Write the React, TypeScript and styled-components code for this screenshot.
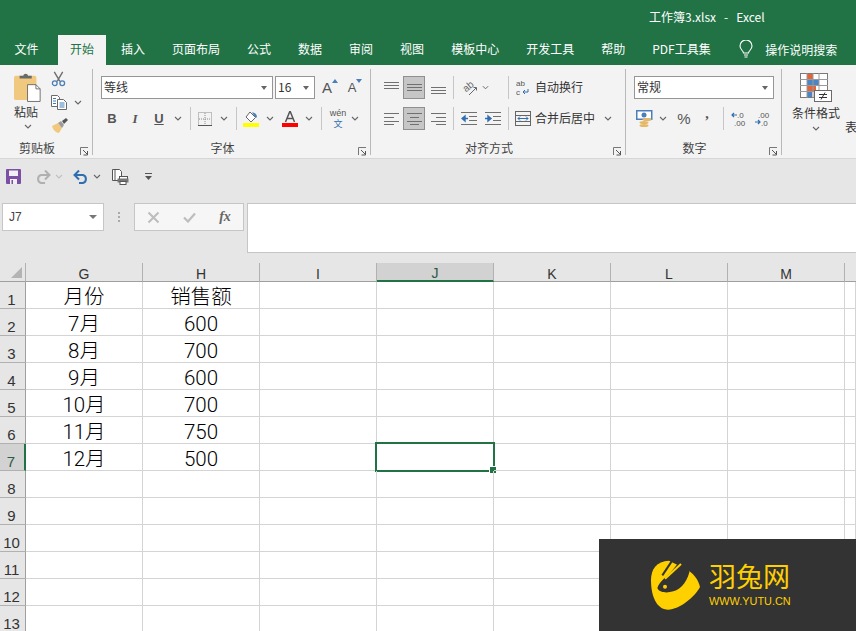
import React from 'react';
import styled, { createGlobalStyle } from 'styled-components';

const GREEN = '#217346';
const UI_FONT = '"Noto Sans CJK SC", "Liberation Sans", sans-serif';

const GlobalStyle = createGlobalStyle`
  html, body {
    margin: 0;
    padding: 0;
    background: #e6e6e6;
  }
  * {
    box-sizing: border-box;
  }
`;

const TABS = ['文件', '开始', '插入', '页面布局', '公式', '数据', '审阅', '视图', '模板中心', '开发工具', '帮助', 'PDF工具集'];
const COLUMNS = ['G', 'H', 'I', 'J', 'K', 'L', 'M'];
const ROW_COUNT = 13;
const SHEET: Record<number, [string, string]> = {
  1: ['月份', '销售额'],
  2: ['7月', '600'],
  3: ['8月', '700'],
  4: ['9月', '600'],
  5: ['10月', '700'],
  6: ['11月', '750'],
  7: ['12月', '500'],
};

const Chevron = ({ color = '#666' }: { color?: string }) => (
  <svg width="8" height="5" viewBox="0 0 8 5">
    <path d="M1 1l3 3 3-3" fill="none" stroke={color} strokeWidth="1.1" />
  </svg>
);

const Lines = ({ rows, w = 15 }: { rows: [number, number][]; w?: number }) => (
  <svg width={w} height="15" viewBox={`0 0 ${w} 15`}>
    {rows.map(([y, len], i) => (
      <rect key={i} x={(w - len) / 2} y={y} width={len} height="1" fill="#707070" />
    ))}
  </svg>
);

const LeftLines = () => (
  <svg width="15" height="15" viewBox="0 0 15 15">
    {[2, 6, 10, 13].map((y, i) => (
      <rect key={y} x="0" y={y} width={i % 2 ? 10 : 15} height="1" fill="#707070" />
    ))}
  </svg>
);

const RightLines = () => (
  <svg width="15" height="15" viewBox="0 0 15 15">
    {[2, 6, 10, 13].map((y, i) => (
      <rect key={y} x={i % 2 ? 5 : 0} y={y} width={i % 2 ? 10 : 15} height="1" fill="#707070" />
    ))}
  </svg>
);

const PasteIcon = () => (
  <svg width="28" height="30" viewBox="0 0 30 32">
    <rect x="0" y="4" width="24" height="26" rx="2" fill="#f0c97f" />
    <path d="M6 7V4h4c0-3 5-3 5 0h4v3z" fill="#6a6a6a" />
    <path d="M14.500 13.500h9l4.500 4.500v13.500h-13.500z" fill="#fff" stroke="#6a6a6a" />
    <path d="M23.500 13.500v4.500h4.500" fill="none" stroke="#6a6a6a" />
  </svg>
);

const CutIcon = () => (
  <svg width="15" height="16" viewBox="0 0 16 16">
    <path d="M3.500 0.500l6 10M12.500 0.500l-6 10" stroke="#6f6f6f" strokeWidth="1.500" fill="none" />
    <circle cx="4" cy="12.500" r="2.500" fill="none" stroke="#4a7fb8" strokeWidth="1.400" />
    <circle cx="12" cy="12.500" r="2.500" fill="none" stroke="#4a7fb8" strokeWidth="1.400" />
  </svg>
);

const CopyIcon = () => (
  <svg width="16" height="15" viewBox="0 0 16 15">
    <path d="M.500.500h6l2 2v9h-8z" fill="#fff" stroke="#6a6a6a" />
    <path d="M6.500 4.500h6l3 3v7h-9z" fill="#fff" stroke="#6a6a6a" />
    <path d="M2 3.500h3M2 6h3M2 8.500h3M8.500 8h5M8.500 10h5M8.500 12h5" stroke="#3f7cb6" />
  </svg>
);

const BrushIcon = () => (
  <svg width="17" height="15" viewBox="0 0 17 15">
    <path d="M1 8l6-3 4 5-3 5c-3 0-6-3-7-7z" fill="#f0c97f" />
    <path d="M7 5l3-2 3 4-2 3z" fill="#9b9b9b" />
    <path d="M11 3l4-3 2 2-4 4z" fill="#555" />
  </svg>
);

const BorderIcon = () => (
  <svg width="14" height="14" viewBox="0 0 14 14">
    <rect x=".5" y=".5" width="13" height="13" fill="none" stroke="#8a8a8a" strokeDasharray="1 1" />
    <path d="M7 1v12M1 7h12" stroke="#8a8a8a" strokeDasharray="1 1" />
    <path d="M0 13.500h14" stroke="#555" />
  </svg>
);

const FillIcon = () => (
  <svg width="16" height="16" viewBox="0 0 16 16">
    <path d="M7 1l5.500 5.500L8 11 3 6z" fill="#fff" stroke="#666" />
    <path d="M9 1.500c3 0 5 2 5 5l-2-.5z" fill="#4a7fb8" />
    <rect x="0" y="12" width="16" height="4" fill="#ffff00" />
  </svg>
);

const FontColorIcon = () => (
  <svg width="16" height="16" viewBox="0 0 16 16">
    <path d="M3.500 11L8 0l4.500 11M5 7.500h6" fill="none" stroke="#555" strokeWidth="1.500" />
    <rect x="0" y="12" width="16" height="4" fill="#ff0000" />
  </svg>
);

const GrowIcon = ({ up }: { up: boolean }) => (
  <svg width="6" height="4" viewBox="0 0 6 4">
    <path d={up ? 'M0 4l3-4 3 4z' : 'M0 0l3 4 3-4z'} fill="#4a7fb8" />
  </svg>
);

const OrientIcon = () => (
  <svg width="18" height="18" viewBox="0 0 18 18">
    <text x="2" y="11" fontSize="10" fill="#666" fontFamily="Liberation Sans, sans-serif" transform="rotate(-40 7 8)">ab</text>
    <path d="M8 16l7-7M12.500 8.500H15.500V11.500" fill="none" stroke="#666" />
  </svg>
);

const WrapIcon = () => (
  <svg width="14" height="18" viewBox="0 0 14 18">
    <text x="0" y="7" fontSize="8" fill="#555" fontFamily="Liberation Sans, sans-serif">ab</text>
    <text x="0" y="16" fontSize="8" fill="#555" fontFamily="Liberation Sans, sans-serif">c</text>
    <path d="M12 10v3H7M9 11l-2 2 2 2" fill="none" stroke="#2f6fb0" />
  </svg>
);

const IndentIcon = ({ flip }: { flip: boolean }) => (
  <svg width="16" height="13" viewBox="0 0 16 13">
    <path d="M0 .5h16M8 4.500h8M8 8.500h8M0 12.500h16" stroke="#707070" />
    <path
      d={flip ? 'M0 6.500h5M3 4l3 2.500L3 9z' : 'M7 6.500H2M4 4L1 6.500 4 9z'}
      stroke="#2f6fb0"
      strokeWidth="1.400"
      fill="#2f6fb0"
    />
  </svg>
);

const MergeIcon = () => (
  <svg width="16" height="15" viewBox="0 0 16 15">
    <rect x=".5" y=".5" width="15" height="14" fill="none" stroke="#666" />
    <path d="M1 4.500h14M1 10.500h14" stroke="#666" />
    <path d="M3 7.500h10M5 5.500l-2 2 2 2M11 5.500l2 2-2 2" fill="none" stroke="#2f6fb0" />
  </svg>
);

const CurrencyIcon = () => (
  <svg width="18" height="17" viewBox="0 0 18 17">
    <rect x=".75" y=".75" width="15" height="8.500" fill="#fff" stroke="#4a7fb8" strokeWidth="1.500" />
    <circle cx="8" cy="5" r="2.500" fill="#4a7fb8" />
    <ellipse cx="11" cy="9.500" rx="4.500" ry="1.500" fill="#e6b866" />
    <ellipse cx="8" cy="12.500" rx="4.500" ry="1.500" fill="#e6b866" />
    <ellipse cx="8" cy="15.500" rx="4.500" ry="1.500" fill="#e6b866" />
  </svg>
);

const DecimalIcon = ({ more }: { more: boolean }) => (
  <svg width="15" height="15" viewBox="0 0 15 15">
    <text x={more ? 6 : 3} y="6.500" fontSize="8" fill="#555" fontFamily="Liberation Sans, sans-serif">{more ? '.0' : '.00'}</text>
    <text x={more ? 3 : 6} y="14.500" fontSize="8" fill="#555" fontFamily="Liberation Sans, sans-serif">{more ? '.00' : '.0'}</text>
    <path
      d={more ? 'M6 4H1M3 2L1 4l2 2' : 'M0 11h5M3 9l2 2-2 2'}
      fill="none"
      stroke="#2f6fb0"
      strokeWidth="1.200"
    />
  </svg>
);

const CondFormatIcon = () => (
  <svg width="32" height="29" viewBox="0 0 32 29">
    <rect x=".5" y=".5" width="27" height="24" fill="#fff" stroke="#7a7a7a" />
    <rect x="7" y="1" width="6" height="5" fill="#e0653a" />
    <rect x="7" y="7" width="12" height="5" fill="#4a86c5" />
    <rect x="7" y="13" width="9" height="5" fill="#e0653a" />
    <rect x="7" y="19" width="5" height="5" fill="#4a86c5" />
    <path d="M7 0v25M19 0v25M13 0v25M0 6.500h28M0 12.500h28M0 18.500h28" stroke="#9a9a9a" />
    <rect x="14.500" y="17.500" width="17" height="11" fill="#fff" stroke="#6a6a6a" />
    <path d="M19 21.500h8M19 24.500h8M25 19.500l-4 7" stroke="#333" fill="none" />
  </svg>
);

const Launcher = () => (
  <LauncherMark width="9" height="9" viewBox="0 0 9 9">
    <path d="M.5 8V.5H8" fill="none" stroke="#777" />
    <path d="M3 3l4 4M7.500 4v4h-4" fill="none" stroke="#555" />
  </LauncherMark>
);

const BulbIcon = () => (
  <svg width="14" height="18" viewBox="0 0 14 18">
    <path
      d="M4.500 13c0-2-3.500-3.500-3.500-7a6 6 0 0 1 12 0c0 3.500-3.500 5-3.500 7zM5 15h4M5.500 17h3"
      fill="none"
      stroke="#fff"
      strokeWidth="1.100"
    />
  </svg>
);

const SaveIcon = () => (
  <svg width="15" height="15" viewBox="0 0 15 15">
    <rect width="15" height="15" rx="1" fill="#7b4fa3" />
    <rect x="3" y="1.500" width="9" height="5.500" fill="#f2eef6" />
    <rect x="4" y="10" width="7" height="5" fill="#f2eef6" />
    <rect x="5.500" y="11" width="1.500" height="4" fill="#7b4fa3" />
  </svg>
);

const ArrowIcon = ({ color, redo }: { color: string; redo: boolean }) => (
  <svg width="16" height="14" viewBox="0 0 16 14" style={redo ? { transform: 'scaleX(-1)' } : undefined}>
    <path d="M2 5h8a4.200 4.200 0 0 1 0 8H6" fill="none" stroke={color} strokeWidth="2" />
    <path d="M6 .5L1.500 5 6 9.500" fill="none" stroke={color} strokeWidth="2" />
  </svg>
);

const PrintPreviewIcon = () => (
  <svg width="17" height="16" viewBox="0 0 17 16">
    <path d="M.5.500h7l2 2v9h-9zM3 .500v11" fill="#fff" stroke="#555" />
    <rect x="7.500" y="7.500" width="8" height="4" fill="#fff" stroke="#555" />
    <rect x="5.500" y="9.500" width="11" height="4" fill="#777" />
    <rect x="8" y="12.500" width="6" height="3" fill="#fff" stroke="#555" />
  </svg>
);

const CustomizeIcon = () => (
  <svg width="7" height="7" viewBox="0 0 7 7">
    <rect x="0" y="0" width="7" height="1" fill="#555" />
    <path d="M0 3h7L3.500 7z" fill="#555" />
  </svg>
);

const CancelIcon = () => (
  <svg width="13" height="13" viewBox="0 0 13 13">
    <path d="M1.500 1.500l10 10M11.500 1.500l-10 10" stroke="#bdbdbd" strokeWidth="2" />
  </svg>
);

const ConfirmIcon = () => (
  <svg width="13" height="11" viewBox="0 0 13 11">
    <path d="M1 5.500l4 4 7-8" fill="none" stroke="#bdbdbd" strokeWidth="2.200" />
  </svg>
);

const RabbitLogo = () => (
  <svg width="60" height="62" viewBox="0 0 180 186">
    <path
      d="M72 26C35 28 18 50 18 85c0 40 12 80 42 87 35 8 90-37 105-67-5-20-15-35-35-50z"
      fill="#ffd000"
    />
    <path
      d="M37 108c8-23 28-33 41-48l32-40 25 30c-5 35-25 60-50 68-20 6-43 4-48-10z"
      fill="#333"
    />
    <path d="M60 80l48-44" stroke="#ffd000" strokeWidth="6" />
    <path d="M52 70l28-42" stroke="#333" strokeWidth="6" />
    <circle cx="60" cy="104" r="6" fill="#ffd000" />
  </svg>
);

const App = () => (
  <Page>
    <GlobalStyle />
    <TitleBar>工作簿3.xlsx&nbsp;&nbsp; -&nbsp;&nbsp; Excel</TitleBar>
    <TabBar>
      {TABS.map((tab) => (
        <Tab key={tab} $active={tab === '开始'}>
          {tab}
        </Tab>
      ))}
      <TellMe>
        <BulbIcon />
        <span>操作说明搜索</span>
      </TellMe>
    </TabBar>

    <Ribbon>
      <Group $width={93}>
        <ClipboardBody>
          <PasteButton>
            <PasteIcon />
            <PasteLabel>粘贴</PasteLabel>
            <Chevron />
          </PasteButton>
          <SmallTools>
            <CutIcon />
            <CopyRow>
              <CopyIcon />
              <Chevron />
            </CopyRow>
            <BrushIcon />
          </SmallTools>
        </ClipboardBody>
        <GroupFoot>
          <GroupLabel>剪贴板</GroupLabel>
          <Launcher />
        </GroupFoot>
      </Group>

      <Group $width={278}>
        <Rows>
          <ToolRow>
            <Select $width={172}>
              <span>等线</span>
              <Caret />
            </Select>
            <Select $width={40} $ml={2}>
              <span>16</span>
              <Caret />
            </Select>
            <GrowButton $width={30}>
              <GrowLetter $size={15}>A</GrowLetter>
              <GrowIcon up />
            </GrowButton>
            <GrowButton $width={20}>
              <GrowLetter $size={13}>A</GrowLetter>
              <GrowIcon up={false} />
            </GrowButton>
          </ToolRow>
          <ToolRow>
            <Slot $w={22}><Bold>B</Bold></Slot>
            <Slot $w={24}><Italic>I</Italic></Slot>
            <Slot $w={24}><Underline>U</Underline></Slot>
            <Slot $w={14}><Chevron /></Slot>
            <Sep $l={5} />
            <Slot $w={28}><BorderIcon /></Slot>
            <Slot $w={10}><Chevron /></Slot>
            <Sep $l={7} />
            <Slot $w={28}><FillIcon /></Slot>
            <Slot $w={10}><Chevron /></Slot>
            <Slot $w={30}><FontColorIcon /></Slot>
            <Slot $w={8}><Chevron /></Slot>
            <Sep $l={8} $r={3} />
            <Slot $w={26}>
              <Phonetic>
                <PhoneticTop>wén</PhoneticTop>
                <PhoneticChar>文</PhoneticChar>
              </Phonetic>
            </Slot>
            <Slot $w={8}><Chevron /></Slot>
          </ToolRow>
        </Rows>
        <GroupFoot>
          <GroupLabel>字体</GroupLabel>
          <Launcher />
        </GroupFoot>
      </Group>

      <Group $width={255}>
        <Rows>
          <ToolRow>
            <Slot $w={24}><Lines rows={[[2, 15], [5, 15], [8, 15]]} /></Slot>
            <ActiveSlot><Lines rows={[[4, 15], [7, 15], [10, 15]]} /></ActiveSlot>
            <Slot $w={26}><Lines rows={[[7, 15], [10, 15], [13, 15]]} /></Slot>
            <Sep $l={2} $r={4} />
            <Slot $w={24}><OrientIcon /></Slot>
            <Slot $w={7}><Chevron /></Slot>
            <Sep $l={19} $r={2} />
            <Slot $w={24}><WrapIcon /></Slot>
            <ToolText>自动换行</ToolText>
          </ToolRow>
          <ToolRow>
            <Slot $w={24}><LeftLines /></Slot>
            <ActiveSlot><Lines rows={[[2, 15], [6, 9], [10, 15], [13, 9]]} /></ActiveSlot>
            <Slot $w={26}><RightLines /></Slot>
            <Sep $l={2} />
            <Slot $w={30}><IndentIcon flip={false} /></Slot>
            <Slot $w={18}><IndentIcon flip /></Slot>
            <Sep $l={6} $r={2} />
            <Slot $w={24}><MergeIcon /></Slot>
            <ToolText>合并后居中</ToolText>
            <Slot $w={26}><Chevron /></Slot>
          </ToolRow>
        </Rows>
        <GroupFoot>
          <GroupLabel>对齐方式</GroupLabel>
          <Launcher />
        </GroupFoot>
      </Group>

      <Group $width={156}>
        <Rows>
          <ToolRow>
            <Select $width={140}>
              <span>常规</span>
              <Caret />
            </Select>
          </ToolRow>
          <ToolRow>
            <Slot $w={22}><CurrencyIcon /></Slot>
            <Slot $w={14}><Chevron /></Slot>
            <Slot $w={28}><Percent>%</Percent></Slot>
            <Slot $w={18}><Comma>,</Comma></Slot>
            <Sep $l={7} />
            <Slot $w={28}><DecimalIcon more /></Slot>
            <Slot $w={20}><DecimalIcon more={false} /></Slot>
          </ToolRow>
        </Rows>
        <GroupFoot>
          <GroupLabel>数字</GroupLabel>
          <Launcher />
        </GroupFoot>
      </Group>

      <CondFormat>
        <CondFormatIcon />
        <CondLabel>条件格式</CondLabel>
        <Chevron />
      </CondFormat>
      <ClippedText>表</ClippedText>
    </Ribbon>

    <QuickAccess>
      <SaveIcon />
      <QuickGroup $ml={14}>
        <ArrowIcon color="#b0b0b0" redo />
        <Chevron color="#c0c0c0" />
      </QuickGroup>
      <QuickGroup $ml={10}>
        <ArrowIcon color="#2f6fb0" redo={false} />
        <Chevron />
      </QuickGroup>
      <QuickGroup $ml={11}>
        <PrintPreviewIcon />
      </QuickGroup>
      <QuickGroup $ml={16}>
        <CustomizeIcon />
      </QuickGroup>
    </QuickAccess>

    <FormulaBar>
      <NameBox>
        <span>J7</span>
        <NameCaret />
      </NameBox>
      <Grip>
        <i />
        <i />
        <i />
      </Grip>
      <FormulaButtons>
        <FormulaSlot><CancelIcon /></FormulaSlot>
        <FormulaSlot><ConfirmIcon /></FormulaSlot>
        <FormulaSlot><FxGlyph>fx</FxGlyph></FormulaSlot>
      </FormulaButtons>
      <FormulaInput />
    </FormulaBar>

    <Sheet>
      <Corner>
        <CornerMark />
      </Corner>
      {COLUMNS.map((col) => (
        <ColHead key={col} $active={col === 'J'}>
          {col}
        </ColHead>
      ))}
      <ColRest />
      {Array.from({ length: ROW_COUNT }, (_, i) => i + 1).map((row) => (
        <React.Fragment key={row}>
          <RowHead $active={row === 7}>{row}</RowHead>
          {COLUMNS.map((col, c) => (
            <Cell key={col}>
              {SHEET[row] && c < 2 ? SHEET[row][c] : ''}
              {row === 7 && col === 'J' && (
                <Selection>
                  <FillHandle />
                </Selection>
              )}
            </Cell>
          ))}
          <Cell />
        </React.Fragment>
      ))}
    </Sheet>

    <Watermark>
      <RabbitLogo />
      <BrandText>
        <BrandName>羽兔网</BrandName>
        <BrandUrl>WWW.YUTU.CN</BrandUrl>
      </BrandText>
    </Watermark>
  </Page>
);

const Page = styled.div`
  position: relative;
  width: 856px;
  height: 631px;
  overflow: hidden;
  background: #e6e6e6;
  font-family: ${UI_FONT};
  color: #444;
`;

const TitleBar = styled.div`
  height: 35px;
  padding: 8px 0 0 649px;
  background: ${GREEN};
  color: #fff;
  font-size: 12px;
  line-height: 18px;
  white-space: nowrap;
`;

const TabBar = styled.div`
  display: flex;
  height: 30px;
  padding-left: 1px;
  background: ${GREEN};
`;

const Tab = styled.div<{ $active: boolean }>`
  padding: 0 ${(props) => (props.$active ? '12px' : '13.5px')};
  margin-left: ${(props) => (props.$active ? '6px' : '0')};
  margin-right: ${(props) => (props.$active ? '1.5px' : '0')};
  background: ${(props) => (props.$active ? '#f3f3f3' : 'transparent')};
  color: ${(props) => (props.$active ? GREEN : '#fff')};
  font-size: 12px;
  line-height: 28px;
  white-space: nowrap;
`;

const TellMe = styled.div`
  display: flex;
  align-items: center;
  gap: 12px;
  margin-left: 15px;
  color: #fff;
  font-size: 12px;
  padding-bottom: 2px;
  white-space: nowrap;
`;

const Ribbon = styled.div`
  display: flex;
  height: 94px;
  background: #f3f3f3;
  border-bottom: 1px solid #d6d6d6;
  overflow: hidden;
`;

const Group = styled.div<{ $width: number }>`
  display: flex;
  flex-direction: column;
  justify-content: space-between;
  flex: none;
  width: ${(props) => props.$width}px;
  height: 86px;
  margin-top: 4px;
  border-right: 1px solid #b9b9b9;
`;

const GroupFoot = styled.div`
  display: flex;
  align-items: center;
  height: 14px;
  padding-right: 3px;
`;

const GroupLabel = styled.div`
  flex: 1;
  padding-right: 6px;
  text-align: center;
  font-size: 12px;
  line-height: 14px;
  color: #444;
`;

const LauncherMark = styled.svg`
  flex: none;
  margin-top: 6px;
`;

const ClipboardBody = styled.div`
  display: flex;
`;

const PasteButton = styled.div`
  display: flex;
  flex-direction: column;
  align-items: center;
  width: 56px;
  padding-top: 3px;

  svg:last-child {
    margin-top: 4px;
  }
`;

const PasteLabel = styled.span`
  margin: 2px 4px 0 0;
  font-size: 12px;
  line-height: 16px;
  color: #333;
`;

const SmallTools = styled.div`
  display: flex;
  flex-direction: column;
  gap: 8px;
  margin-left: -5px;
  padding-top: 2px;
`;

const CopyRow = styled.div`
  display: flex;
  align-items: center;
  gap: 7px;
`;

const Rows = styled.div`
  display: flex;
  flex-direction: column;
  gap: 8px;
  padding: 7px 0 0 8px;
`;

const ToolRow = styled.div`
  display: flex;
  align-items: center;
  height: 23px;
`;

const Select = styled.div<{ $width: number; $ml?: number }>`
  display: flex;
  align-items: center;
  justify-content: space-between;
  flex: none;
  width: ${(props) => props.$width}px;
  height: 23px;
  margin-left: ${(props) => props.$ml ?? 0}px;
  padding: 0 5px 2px 2px;
  background: #fff;
  border: 1px solid #969696;
  font-size: 12px;
  color: #333;
`;

const Caret = styled.i`
  width: 0;
  height: 0;
  margin-top: 2px;
  border-left: 3.5px solid transparent;
  border-right: 3.5px solid transparent;
  border-top: 4px solid #666;
`;

const GrowButton = styled.div<{ $width: number }>`
  display: flex;
  align-items: flex-start;
  justify-content: center;
  flex: none;
  width: ${(props) => props.$width}px;
  color: #555;
`;

const GrowLetter = styled.span<{ $size: number }>`
  font-family: 'Liberation Sans', sans-serif;
  font-size: ${(props) => props.$size}px;
  line-height: 18px;
`;

const Slot = styled.div<{ $w: number }>`
  display: flex;
  align-items: center;
  justify-content: center;
  flex: none;
  width: ${(props) => props.$w}px;
  height: 23px;
`;

const ActiveSlot = styled(Slot).attrs({ $w: 22 })`
  background: #c6c6c6;
  border: 1px solid #8f8f8f;
`;

const Sep = styled.div<{ $l?: number; $r?: number }>`
  flex: none;
  width: 1px;
  height: 23px;
  margin-left: ${(props) => props.$l ?? 0}px;
  margin-right: ${(props) => props.$r ?? 0}px;
  background: #c6c6c6;
`;

const Bold = styled.span`
  font: bold 13px 'Liberation Sans', sans-serif;
  color: #555;
`;

const Italic = styled.span`
  font: italic 700 13px 'Liberation Serif', serif;
  color: #555;
`;

const Underline = styled.span`
  font: bold 13px 'Liberation Sans', sans-serif;
  text-decoration: underline;
  color: #555;
`;

const Phonetic = styled.div`
  display: flex;
  flex-direction: column;
  align-items: center;
  gap: 2px;
`;

const PhoneticTop = styled.div`
  font-family: 'Liberation Sans', sans-serif;
  font-size: 9px;
  line-height: 8px;
  color: #555;
`;

const PhoneticChar = styled.div`
  font-size: 9px;
  line-height: 9px;
  color: #2f6fb0;
`;

const ToolText = styled.span`
  padding-bottom: 2px;
  font-size: 12px;
  color: #333;
  white-space: nowrap;
`;

const Percent = styled.span`
  font-family: 'Liberation Sans', sans-serif;
  font-size: 15px;
  color: #555;
`;

const Comma = styled.span`
  margin-top: -10px;
  font: bold 14px 'Liberation Serif', serif;
  color: #555;
`;

const CondFormat = styled.div`
  display: flex;
  flex-direction: column;
  align-items: center;
  flex: none;
  width: 63px;
  padding: 8px 0 0 5px;

  svg:last-child {
    margin-top: 5px;
  }
`;

const CondLabel = styled.span`
  margin-top: 3px;
  font-size: 12px;
  line-height: 16px;
  color: #333;
`;

const ClippedText = styled.div`
  flex: none;
  padding-top: 53px;
  font-size: 12px;
  color: #333;
`;

const QuickAccess = styled.div`
  display: flex;
  align-items: center;
  height: 36px;
  padding: 0 0 1px 6px;
`;

const QuickGroup = styled.div<{ $ml: number }>`
  display: flex;
  align-items: center;
  gap: 4px;
  margin-left: ${(props) => props.$ml}px;
`;

const FormulaBar = styled.div`
  display: flex;
  height: 50px;
  margin-top: 8px;
  padding-left: 2px;
`;

const NameBox = styled.div`
  display: flex;
  align-items: center;
  justify-content: space-between;
  flex: none;
  width: 102px;
  height: 28px;
  padding: 0 6px;
  background: #fff;
  border: 1px solid #c6c6c6;
  font-family: 'Liberation Sans', sans-serif;
  font-size: 12px;
  color: #444;
`;

const NameCaret = styled.i`
  width: 0;
  height: 0;
  border-left: 4px solid transparent;
  border-right: 4px solid transparent;
  border-top: 4px solid #777;
`;

const Grip = styled.div`
  display: flex;
  flex-direction: column;
  align-items: center;
  justify-content: center;
  gap: 2px;
  flex: none;
  width: 30px;
  height: 28px;

  i {
    width: 2px;
    height: 2px;
    background: #aaa;
  }
`;

const FormulaButtons = styled.div`
  display: flex;
  align-items: center;
  flex: none;
  width: 110px;
  height: 28px;
  background: #f6f6f6;
  border: 1px solid #c6c6c6;
`;

const FormulaSlot = styled.div`
  display: flex;
  align-items: center;
  justify-content: center;
  flex: none;
  width: 36px;
`;

const FxGlyph = styled.span`
  font: italic bold 14px 'Liberation Serif', serif;
  color: #666;
`;

const FormulaInput = styled.div`
  flex: 1;
  height: 50px;
  margin-left: 3px;
  background: #fff;
  border: 1px solid #c6c6c6;
  border-right: 0;
`;

const Sheet = styled.div`
  display: grid;
  grid-template-columns: 26px repeat(7, 117px) 1fr;
  grid-template-rows: 19px;
  grid-auto-rows: 27px;
  margin-top: 10px;
  background: #fff;
`;

const Corner = styled.div`
  position: relative;
  background: #e6e6e6;
  border-right: 1px solid #b1b1b1;
  border-bottom: 1px solid #9f9f9f;
`;

const CornerMark = styled.div`
  position: absolute;
  right: 3px;
  bottom: 3px;
  width: 0;
  height: 0;
  border-left: 11px solid transparent;
  border-bottom: 11px solid #b4b4b4;
`;

const ColHead = styled.div<{ $active: boolean }>`
  display: flex;
  align-items: flex-end;
  justify-content: center;
  background: ${(props) => (props.$active ? '#d2d2d2' : '#e6e6e6')};
  border-right: 1px solid #b1b1b1;
  border-bottom: ${(props) => (props.$active ? `2px solid ${GREEN}` : '1px solid #9f9f9f')};
  font-family: 'Liberation Sans', sans-serif;
  font-size: 14px;
  line-height: 14px;
  color: ${(props) => (props.$active ? '#2c5a44' : '#333')};
`;

const ColRest = styled.div`
  background: #e6e6e6;
  border-bottom: 1px solid #9f9f9f;
`;

const RowHead = styled.div<{ $active: boolean }>`
  display: flex;
  align-items: flex-end;
  justify-content: center;
  background: ${(props) => (props.$active ? '#d2d2d2' : '#e6e6e6')};
  border-right: ${(props) => (props.$active ? `2px solid ${GREEN}` : '1px solid #9f9f9f')};
  border-bottom: 1px solid #b1b1b1;
  padding-right: 2px;
  font-family: 'Liberation Sans', sans-serif;
  font-size: 15px;
  line-height: 16px;
  color: ${(props) => (props.$active ? '#2c5a44' : '#333')};
`;

const Cell = styled.div`
  position: relative;
  display: flex;
  align-items: flex-start;
  justify-content: center;
  border-right: 1px solid #d4d4d4;
  border-bottom: 1px solid #d4d4d4;
  font-family: Roboto, 'Noto Sans CJK SC', sans-serif;
  font-size: 20.5px;
  font-weight: 300;
  line-height: 30px;
  color: #000;
`;

const Selection = styled.div`
  position: absolute;
  top: -2px;
  left: -2px;
  right: -2px;
  bottom: -2px;
  border: 2px solid ${GREEN};
`;

const FillHandle = styled.div`
  position: absolute;
  right: -3px;
  bottom: -3px;
  width: 6px;
  height: 6px;
  background: ${GREEN};
  outline: 1px solid #fff;
`;

const Watermark = styled.div`
  position: absolute;
  left: 599px;
  top: 539px;
  right: 0;
  bottom: 0;
  display: flex;
  align-items: flex-start;
  gap: 4px;
  padding: 13px 0 0 46px;
  background: #333;
`;

const BrandText = styled.div`
  display: flex;
  flex-direction: column;
  align-items: flex-start;
  gap: 4px;
  padding-top: 9px;
  color: #ffd000;
`;

const BrandName = styled.div`
  font-size: 27px;
  line-height: 30px;
  white-space: nowrap;
`;

const BrandUrl = styled.div`
  font-family: 'Liberation Sans', sans-serif;
  font-size: 10.9px;
  line-height: 12px;
  white-space: nowrap;
`;

export default App;
